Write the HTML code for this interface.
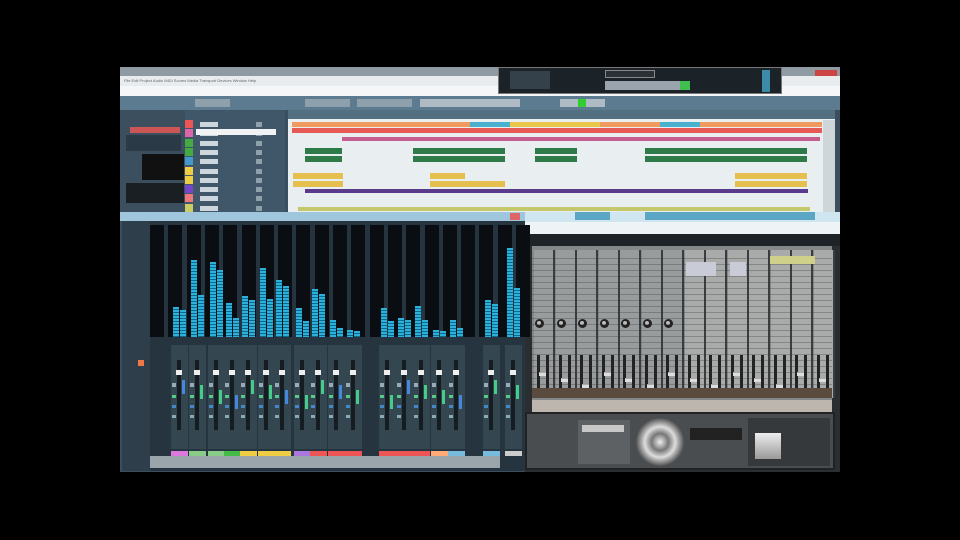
<!DOCTYPE html>
<html><head><meta charset="utf-8"><style>
*{margin:0;padding:0;box-sizing:border-box}
body{width:960px;height:540px;background:#000;position:relative;overflow:hidden;font-family:"Liberation Sans",sans-serif;font-size:5px}
div{position:absolute}
</style></head><body>
<div id="app" style="left:120px;top:67px;width:720px;height:405px;background:#3a4e5e"></div>
<div style="left:120px;top:67px;width:720px;height:9px;background:#8f9aa3"></div>
<div style="left:120px;top:76px;width:720px;height:10px;background:#e8ecef;color:#666;font-size:4px;line-height:10px;padding-left:4px">File Edit Project Audio MIDI Scores Media Transport Devices Window Help</div>
<div style="left:120px;top:86px;width:720px;height:10px;background:#f4f6f8"></div>
<div style="left:120px;top:96px;width:720px;height:14px;background:#5d7b90"></div>
<div style="left:498px;top:67px;width:284px;height:27px;background:#1c2328;border:1px solid #777"></div>
<div style="left:510px;top:71px;width:40px;height:18px;background:#34404a"></div>
<div style="left:605px;top:70px;width:50px;height:8px;background:#2a3036;border:1px solid #888"></div>
<div style="left:605px;top:81px;width:85px;height:9px;background:#9aa4ad"></div>
<div style="left:680px;top:81px;width:10px;height:9px;background:#3fbf4f"></div>
<div style="left:762px;top:70px;width:8px;height:22px;background:#3a8aa8"></div>
<div style="left:815px;top:70px;width:22px;height:6px;background:#c44"></div>
<div style="left:195px;top:99px;width:35px;height:8px;background:#8fa0ad"></div>
<div style="left:305px;top:99px;width:45px;height:8px;background:#8fa0ad"></div>
<div style="left:357px;top:99px;width:55px;height:8px;background:#8fa0ad"></div>
<div style="left:420px;top:99px;width:100px;height:8px;background:#aebac4"></div>
<div style="left:560px;top:99px;width:45px;height:8px;background:#aebac4"></div>
<div style="left:578px;top:99px;width:8px;height:8px;background:#3c3"></div>
<div style="left:120px;top:110px;width:65px;height:105px;background:#3b4f5f"></div>
<div style="left:130px;top:127px;width:50px;height:6px;background:#c55"></div>
<div style="left:126px;top:135px;width:55px;height:16px;background:#2a3a46"></div>
<div style="left:142px;top:154px;width:42px;height:26px;background:#111"></div>
<div style="left:126px;top:183px;width:58px;height:20px;background:#1a1f24"></div>
<div style="left:185px;top:110px;width:100px;height:105px;background:#3f5768"></div>
<div id="tl" style="left:288px;top:110px;width:547px;height:105px;background:#e9eef0"></div>
<div style="left:288px;top:110px;width:547px;height:9px;background:#52707f"></div>
<div style="left:823px;top:120px;width:12px;height:95px;background:#cfd6da"></div>
<div style="left:120px;top:212px;width:405px;height:9px;background:#9fc6dd"></div>
<div style="left:510px;top:213px;width:10px;height:7px;background:#d66"></div>
<div style="left:122px;top:221px;width:403px;height:250px;background:#263440"></div>
<div style="left:525px;top:212px;width:315px;height:10px;background:#cfe6f0"></div>
<div style="left:575px;top:212px;width:35px;height:8px;background:#5aa6c4"></div>
<div style="left:645px;top:212px;width:170px;height:8px;background:#5aa6c4"></div>
<div style="left:525px;top:222px;width:315px;height:12px;background:#eef3f6"></div>
<div style="left:525px;top:234px;width:315px;height:12px;background:#1e2328"></div>
<div style="left:525px;top:246px;width:315px;height:226px;background:#2a2e31"></div>
<div style="left:532px;top:246px;width:300px;height:155px;background:#858889"></div>
<div style="left:532px;top:400px;width:300px;height:12px;background:#bdb6ae"></div>
<div style="left:525px;top:412px;width:310px;height:58px;background:#4a4d50;border:2px solid #222"></div>
<div style="left:578px;top:420px;width:52px;height:44px;background:#5e6164"></div>
<div style="left:582px;top:425px;width:42px;height:7px;background:#c8c8c8"></div>
<div style="left:636px;top:418px;width:48px;height:48px;border-radius:50%;background:radial-gradient(circle,#eee 0,#777 25%,#ddd 45%,#555 70%,#999 100%)"></div>
<div style="left:690px;top:428px;width:52px;height:12px;background:#222"></div>
<div style="left:748px;top:418px;width:82px;height:48px;background:#35393c"></div>
<div style="left:755px;top:433px;width:26px;height:26px;background:linear-gradient(#eee,#999)"></div>
<script>
function r(x,y,w,h,c,p){var d=document.createElement('div');d.style.cssText='left:'+x+'px;top:'+y+'px;width:'+w+'px;height:'+h+'px;background:'+c+';'+(p||'');document.body.appendChild(d);}
var tc=['#e55','#d6a','#4a4','#4a4','#49c','#ec4','#ec4','#74c','#e77','#cc6'];
for(var i=0;i<10;i++){r(185,120+i*9.3,8,8,tc[i]);r(200,122+i*9.3,18,5,'#cdd6dc');r(256,122+i*9.3,6,5,'#8fa0ad');}
r(196,129,80,6,'#f0f2f4');
r(292,122,530,5,'#f09a60');r(510,122,90,5,'#e9c74a');r(470,122,40,5,'#4ab0d0');r(660,122,40,5,'#4ab0d0');
r(292,128,530,5,'#e55a55');r(342,137,478,4,'#c55e8e');
r(305,148,37,6,'#2e7a48');r(413,148,92,6,'#2e7a48');r(535,148,42,6,'#2e7a48');r(645,148,162,6,'#2e7a48');
r(305,156,37,6,'#2e7a48');r(413,156,92,6,'#2e7a48');r(535,156,42,6,'#2e7a48');r(645,156,162,6,'#2e7a48');
r(293,173,50,6,'#e6c04e');r(430,173,35,6,'#e6c04e');r(735,173,72,6,'#e6c04e');
r(293,181,50,6,'#e6c04e');r(430,181,75,6,'#e6c04e');r(735,181,72,6,'#e6c04e');
r(305,189,503,4,'#5a3a8a');r(298,207,512,4,'#c4c86a');
var ch=[[173,307],[191,260],[210,262],[226,303],[242,296],[260,268],[276,280],[296,308],[312,289],[330,320],[347,330],[381,308],[398,318],[415,306],[433,330],[450,320],[485,300],[507,248]];
for(var x=150;x<520;x+=18.3){r(x,225,14,112,'#0a0e12');}
var mg='repeating-linear-gradient(#2cb0dc 0 2px,#0a6a8c 2px 3px)';
ch.forEach(function(c,i){var h=337-c[1];var h2=Math.max(4,h*(i%2?0.55:0.9));
 r(c[0],c[1],6,h,mg);r(c[0]+7,337-h2,6,h2,mg);
 r(c[0]-2,345,17,104,'#34464f');r(c[0]+4,360,4,70,'#151c22');
 r(c[0]+3,370,6,5,'#eee');r(c[0]-1,383,4,4,'#9ab');r(c[0]-1,395,4,3,'#5c8');r(c[0]-1,405,4,3,'#48c');r(c[0]-1,415,4,3,'#8ab');r(c[0]+9,380+(i%4)*5,3,14,i%3?'#4c8':'#48d');});
r(122,221,28,250,'#2e3e4a');r(138,360,6,6,'#e74');
var lc=['#d7d','#8c8','#8c8','#4b4','#ec4','#ec4','#ec4','#a7d','#e55','#e55','#e55','#e55','#e55','#e55','#fa7','#7bd','#7bd','#ccc'];
for(var i=0;i<18;i++)r(ch[i][0]-2,451,17,5,lc[i]);
r(150,456,350,12,'#9aa4ab');
for(var i=0;i<14;i++){var x=534+i*21.5;r(x,250,19,148,i<7?'#999c9d':'#a9abab');r(x+19,250,2,148,'#3a3d3f');
 if(i<7){r(x+1,319,9,9,'#222','border-radius:50%');r(x+3,321,4,4,'#bbb','border-radius:50%');}
 r(x+3,355,3,34,'#222');r(x+12,355,3,34,'#222');r(x+5,372+(i%3)*6,7,4,'#ddd');}
for(var y=258;y<400;y+=6)r(532,y,300,1,'rgba(50,50,50,.3)');
r(686,262,30,14,'#c9ccd6');r(730,262,16,14,'#c9ccd6');r(770,256,45,8,'#cfd08a');
r(532,388,300,10,'#5b4a3e');
</script>
</body></html>
